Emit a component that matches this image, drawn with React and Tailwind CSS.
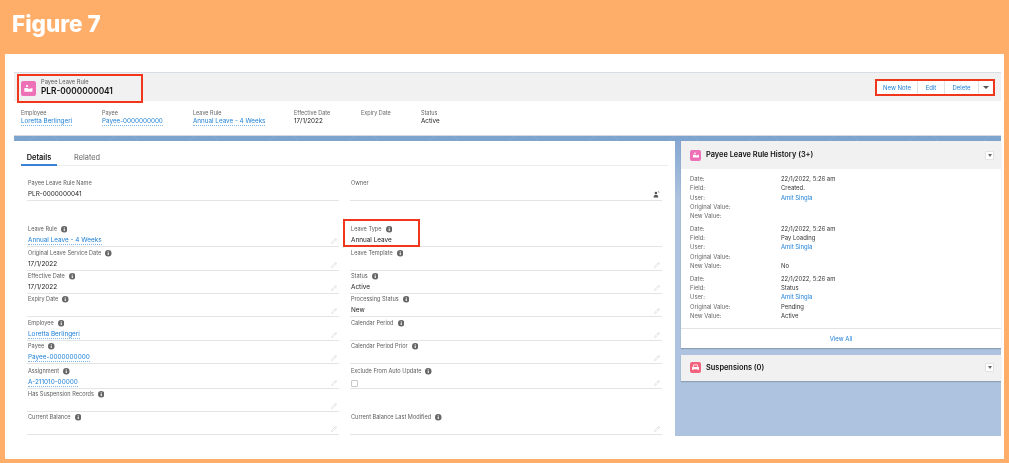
import React from 'react';
import { Pencil } from 'lucide-react';

const InfoIcon = () => (
  <svg viewBox="0 0 12 12" className="w-[6.5px] h-[6.5px] shrink-0">
    <circle cx="6" cy="6" r="6" fill="#666" />
    <rect x="5" y="5" width="2" height="4.2" fill="#fff" />
    <rect x="5" y="2.6" width="2" height="1.6" fill="#fff" />
  </svg>
);

const LeaveIcon = ({ size }) => (
  <div className={`${size} rounded-[2px] bg-[#ee70b6] flex items-center justify-center shrink-0`}>
    <svg viewBox="0 0 16 16" className="w-[72%] h-[72%]" fill="#fff">
      <circle cx="6" cy="4.5" r="1.7" />
      <path d="M2 7.5h5l1.5 1.5L14 7.5v5.5H2z" />
    </svg>
  </div>
);

const CarIcon = () => (
  <div className="w-[11px] h-[11px] rounded-[2px] bg-[#f2637e] flex items-center justify-center shrink-0">
    <svg viewBox="0 0 16 16" className="w-[9px] h-[9px]" fill="#fff">
      <path d="M4.5 2.5h7L13 7h1v5.5h-2.2V11H4.2v1.5H2V7h1zM5.3 4 4.6 7h6.8l-.7-3z" />
    </svg>
  </div>
);

const LockIcon = () => (
  <svg viewBox="0 0 12 12" className="w-[7px] h-[7px] shrink-0 mb-[2px]" fill="#555">
    <circle cx="5" cy="3.6" r="2.2" />
    <path d="M1 11c0-3 1.6-4 4-4s4 1 4 4z" />
    <path d="M8 1.2a2 2 0 0 1 3 1.6h-1a1 1 0 0 0-1.6-.8z" />
  </svg>
);

const MenuButton = () => (
  <div className="w-[9px] h-[9px] bg-white border border-[#e2e2e2] rounded-[1px] flex items-center justify-center">
    <div className="w-0 h-0 border-l-[2.5px] border-r-[2.5px] border-t-[3px] border-l-transparent border-r-transparent border-t-[#666]" />
  </div>
);

const ValueLink = ({ children }) => (
  <span className="text-[#1b7fd8] border-b border-dotted border-[#7db5e8] leading-[7px]">{children}</span>
);

const Field = ({ label, info = true, value, link, editIcon = 'pencil', checkbox, height }) => (
  <div className={`${height} border-b border-[#e4e4e4] pl-[1px] pr-[2px] flex flex-col justify-end`}>
    <div className="flex items-center gap-[4px] text-[5.6px] text-[#5c5c5c] h-[9px] mb-[3px]">
      <span>{label}</span>
      {info && <InfoIcon />}
    </div>
    <div className="flex items-end justify-between h-[9px] text-[6.4px] text-[#222]">
      <span>
        {link ? <ValueLink>{value}</ValueLink> : value}
        {checkbox && <span className="block w-[7px] h-[7px] border border-[#c9c9c9] rounded-[1px] mb-[1px]" />}
      </span>
      {editIcon === 'pencil' && <Pencil size={6} color="#c4c4c4" strokeWidth={1.6} className="shrink-0 mb-[2px]" />}
      {editIcon === 'lock' && <LockIcon />}
    </div>
  </div>
);

const highlights = [
  { label: 'Employee', value: 'Loretta Berlingeri', link: true, width: 'w-[81px]' },
  { label: 'Payee', value: 'Payee-0000000000', link: true, width: 'w-[91px]' },
  { label: 'Leave Rule', value: 'Annual Leave - 4 Weeks', link: true, width: 'w-[101px]' },
  { label: 'Effective Date', value: '17/1/2022', width: 'w-[67px]' },
  { label: 'Expiry Date', value: '', width: 'w-[60px]' },
  { label: 'Status', value: 'Active', width: 'w-[60px]' },
];

const rows = [
  { height: 'h-[24px]', left: { label: 'Original Leave Service Date', value: '17/1/2022' }, right: { label: 'Leave Template' } },
  { height: 'h-[23px]', left: { label: 'Effective Date', value: '17/1/2022' }, right: { label: 'Status', value: 'Active' } },
  { height: 'h-[23px]', left: { label: 'Expiry Date' }, right: { label: 'Processing Status', value: 'New' } },
  { height: 'h-[24px]', left: { label: 'Employee', value: 'Loretta Berlingeri', link: true }, right: { label: 'Calendar Period' } },
  { height: 'h-[23px]', left: { label: 'Payee', value: 'Payee-0000000000', link: true }, right: { label: 'Calendar Period Prior' } },
  { height: 'h-[25px]', left: { label: 'Assignment', value: 'A-211010-00000', link: true }, right: { label: 'Exclude From Auto Update', checkbox: true } },
];

const history = [
  [
    ['Date:', '22/1/2022, 5:26 am'],
    ['Field:', 'Created.'],
    ['User:', 'Amit Singla', true],
    ['Original Value:', ''],
    ['New Value:', ''],
  ],
  [
    ['Date:', '22/1/2022, 5:26 am'],
    ['Field:', 'Pay Loading'],
    ['User:', 'Amit Singla', true],
    ['Original Value:', ''],
    ['New Value:', 'No'],
  ],
  [
    ['Date:', '22/1/2022, 5:26 am'],
    ['Field:', 'Status'],
    ['User:', 'Amit Singla', true],
    ['Original Value:', 'Pending'],
    ['New Value:', 'Active'],
  ],
];

const Band = () => (
  <div className="h-[6px] bg-[#7da3cf] border-t border-[#d4d8de] overflow-hidden">
    <svg viewBox="0 0 987 6" className="w-full h-[6px] block" fill="none" stroke="#94b5da" strokeWidth="0.6">
      {[30, 110, 190, 270, 350, 430, 510, 590, 670, 750, 830, 910, 985].map((x) => (
        <circle key={x} cx={x} cy="14" r="17" />
      ))}
    </svg>
  </div>
);

export default function App() {
  return (
    <div className="w-[1009px] h-[463px] bg-[#ffae69] overflow-hidden flex flex-col font-['Inter',sans-serif] blur-[0.3px]">
      <div className="h-[54px] pl-[12px] pb-[6px] flex items-center shrink-0">
        <h1 className="text-[22.5px] font-extrabold text-white leading-none">Figure 7</h1>
      </div>

      <div className="ml-[5px] mr-[5px] h-[405px] bg-white pt-[18px] pl-[9px] pr-[3px]">
        {/* Record header */}
        <div className="h-[29px] bg-[#f1f1f1] border-t border-[#d8dde6] flex justify-between">
          <div className="ml-[3px] mt-[1px] w-[126px] h-[29px] border-2 border-[#f0371c] flex items-center pl-[2px] gap-[5px]">
            <LeaveIcon size="w-[15px] h-[15px]" />
            <div className="-mt-[3px]">
              <div className="text-[5.7px] text-[#5c5c5c] leading-[8px]">Payee Leave Rule</div>
              <div className="text-[8.3px] font-semibold text-[#111] leading-[10px]">PLR-0000000041</div>
            </div>
          </div>
          <div className="mr-[6px] mt-[6px] h-[17px] w-[120px] border-2 border-[#f0371c] bg-white flex items-center text-[6px] text-[#1b7fd8]">
            <div className="w-[41px] text-center border-r border-[#e2e2e2] leading-[13px]">New Note</div>
            <div className="w-[27px] text-center border-r border-[#e2e2e2] leading-[13px]">Edit</div>
            <div className="w-[34px] text-center border-r border-[#e2e2e2] leading-[13px]">Delete</div>
            <div className="flex-1 flex justify-center">
              <div className="w-0 h-0 border-l-[3px] border-r-[3px] border-t-[3px] border-l-transparent border-r-transparent border-t-[#555]" />
            </div>
          </div>
        </div>

        {/* Highlights */}
        <div className="h-[34px] pl-[7px] pt-[8px] flex">
          {highlights.map((h) => (
            <div key={h.label} className={h.width}>
              <div className="text-[5.5px] text-[#666] leading-[8px]">{h.label}</div>
              <div className="text-[6.3px] text-[#222] leading-[9px]">
                {h.link ? <ValueLink>{h.value}</ValueLink> : h.value}
              </div>
            </div>
          ))}
        </div>

        <Band />

        <div className="h-[295px] flex">
          {/* Details card */}
          <div className="w-[661px] bg-white">
            <div className="h-[25px] mx-[7px] border-b border-[#ececec] flex items-end text-[7.4px]">
              <div className="w-[36px] h-[13px] text-center font-semibold text-[#111] border-b-2 border-[#3b82d6] -mb-[1px] leading-[9px]">Details</div>
              <div className="ml-[17px] h-[12px] text-[#666] leading-[9px]">Related</div>
            </div>
            <div className="mt-[12px] px-[13px]">
              <div className="grid grid-cols-2 gap-x-[11px]">
                <Field height="h-[23px]" label="Payee Leave Rule Name" info={false} value="PLR-0000000041" editIcon="none" />
                <Field height="h-[23px]" label="Owner" info={false} editIcon="lock" />
              </div>
              <div className="h-[23px]" />
              <div className="grid grid-cols-2 gap-x-[11px]">
                <Field height="h-[23px]" label="Leave Rule" value="Annual Leave - 4 Weeks" link />
                <div className="h-[23px] relative">
                  <Field height="h-[23px]" label="Leave Type" value="Annual Leave" editIcon="none" />
                  <div className="absolute -left-[7px] -top-[5px] w-[77px] h-[28px] border-2 border-[#f0371c]" />
                </div>
                {rows.map((r) => (
                  <React.Fragment key={r.left.label}>
                    <Field height={r.height} {...r.left} />
                    <Field height={r.height} {...r.right} />
                  </React.Fragment>
                ))}
                <Field height="h-[23px]" label="Has Suspension Records" />
                <div className="h-[23px]" />
                <Field height="h-[23px]" label="Current Balance" />
                <Field height="h-[23px]" label="Current Balance Last Modified" />
              </div>
            </div>
          </div>

          {/* Sidebar */}
          <div className="w-[326px] pl-[6px] bg-linear-to-b from-[#86a8d2] to-[#aec3df] to-[20%] bg-[#aec3df]">
            <div className="bg-white shadow-[0_1px_1px_rgba(80,90,110,0.35)]">
              <div className="h-[28px] bg-[#f1f1f1] pl-[9px] pr-[7px] flex items-center gap-[5px]">
                <LeaveIcon size="w-[11px] h-[11px]" />
                <span className="flex-1 text-[7.4px] font-semibold text-[#111]">Payee Leave Rule History (3+)</span>
                <MenuButton />
              </div>
              <div className="pt-[6px] pl-[9px] flex flex-col gap-[4px] text-[5.9px]">
                {history.map((block, i) => (
                  <div key={i}>
                    {block.map(([k, v, isLink]) => (
                      <div key={k} className="flex h-[9.2px] items-center">
                        <span className="w-[91px] text-[#666]">{k}</span>
                        <span className={isLink ? 'text-[#1b7fd8]' : 'text-[#333]'}>{v}</span>
                      </div>
                    ))}
                  </div>
                ))}
              </div>
              <div className="mt-[7px] h-[20px] border-t border-[#e4e4e4] flex items-center justify-center text-[6px] text-[#1b7fd8]">
                View All
              </div>
            </div>
            <div className="mt-[7px] h-[26px] bg-[#f1f1f1] shadow-[0_1px_1px_rgba(80,90,110,0.35)] pl-[9px] pr-[7px] flex items-center gap-[5px]">
              <CarIcon />
              <span className="flex-1 text-[7.4px] font-semibold text-[#111]">Suspensions (0)</span>
              <MenuButton />
            </div>
          </div>
        </div>
      </div>
    </div>
  );
}
